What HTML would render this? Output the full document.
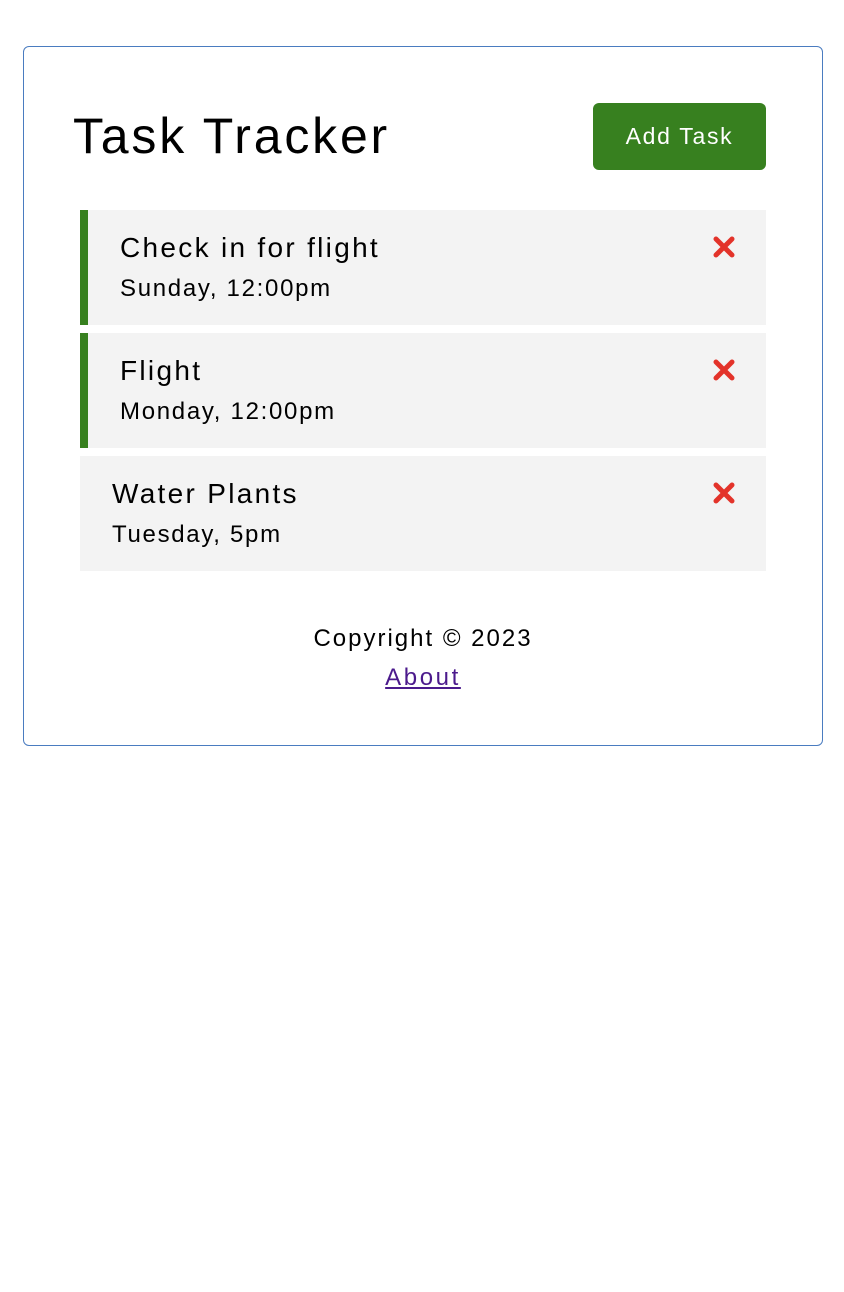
<!DOCTYPE html>
<html><head><style>
body{margin:0;background:#fff;font-family:"Liberation Sans",sans-serif;}
.c{position:absolute;left:23px;top:46px;width:798px;height:698px;border:1px solid #4a7cc0;border-radius:6px;}
h1{position:absolute;left:49px;top:64px;margin:0;font-size:50px;font-weight:normal;line-height:1;letter-spacing:2.8px;}
.btn{position:absolute;left:569px;top:56px;width:173px;height:67px;background:#37801f;color:#fff;border-radius:6px;font-size:23px;line-height:67px;text-align:center;letter-spacing:1.7px;}
.t{position:absolute;left:56px;width:686px;height:115px;background:#f3f3f3;box-sizing:border-box;}
.t.r{border-left:8px solid #37801f;}
.t .n{position:absolute;left:32px;top:22px;font-size:28px;letter-spacing:2.3px;}
.t .d{position:absolute;left:32px;top:65px;font-size:24px;letter-spacing:1.7px;}
.x{position:absolute;right:30px;top:25px;}
.f{position:absolute;left:0;width:100%;text-align:center;font-size:24px;letter-spacing:2px;}
a{color:#4b1a8c;letter-spacing:2.6px;}
</style></head><body>
<div class="c">
<h1>Task Tracker</h1>
<div class="btn">Add Task</div>
<div class="t r" style="top:163px"><div class="n">Check in for flight</div><div class="d">Sunday, 12:00pm</div><svg class="x" width="24" height="24" viewBox="0 0 24 24"><path d="M4 4L20 20M20 4L4 20" stroke="#e3332a" stroke-width="5" stroke-linecap="round"/></svg></div>
<div class="t r" style="top:286px"><div class="n">Flight</div><div class="d">Monday, 12:00pm</div><svg class="x" width="24" height="24" viewBox="0 0 24 24"><path d="M4 4L20 20M20 4L4 20" stroke="#e3332a" stroke-width="5" stroke-linecap="round"/></svg></div>
<div class="t nr" style="top:409px"><div class="n">Water Plants</div><div class="d">Tuesday, 5pm</div><svg class="x" width="24" height="24" viewBox="0 0 24 24"><path d="M4 4L20 20M20 4L4 20" stroke="#e3332a" stroke-width="5" stroke-linecap="round"/></svg></div>
<div class="f" style="top:578px">Copyright © 2023</div>
<div class="f" style="top:617px"><a href="#">About</a></div>
</div>
</body></html>
